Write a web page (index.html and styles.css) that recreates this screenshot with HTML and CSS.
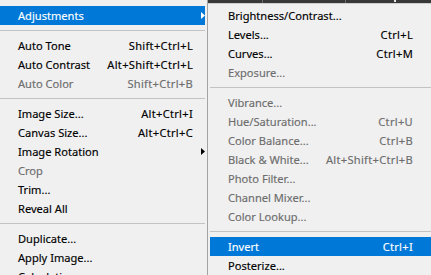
FILE: index.html
```html
<!DOCTYPE html>
<html lang="en">
<head>
    <meta charset="UTF-8">
    <title>Image menu - Adjustments</title>
    <link rel="stylesheet" href="styles.css">
</head>
<body>
    <div class="screen">
        <div class="menu main">
            <div class="item active"><span>Adjustments</span><span class="key"></span><svg class="arrow" width="4" height="7" viewBox="0 0 4 7"><polygon points="0,0 4,3.5 0,7"/></svg></div>
            <div class="sep"></div>
            <div class="item"><span>Auto Tone</span><span class="key">Shift+Ctrl+L</span></div>
            <div class="item"><span>Auto Contrast</span><span class="key">Alt+Shift+Ctrl+L</span></div>
            <div class="item off"><span>Auto Color</span><span class="key">Shift+Ctrl+B</span></div>
            <div class="sep"></div>
            <div class="item"><span>Image Size...</span><span class="key">Alt+Ctrl+I</span></div>
            <div class="item"><span>Canvas Size...</span><span class="key">Alt+Ctrl+C</span></div>
            <div class="item"><span>Image Rotation</span><span class="key"></span><svg class="arrow" width="4" height="7" viewBox="0 0 4 7"><polygon points="0,0 4,3.5 0,7"/></svg></div>
            <div class="item off"><span>Crop</span><span class="key"></span></div>
            <div class="item"><span>Trim...</span><span class="key"></span></div>
            <div class="item"><span>Reveal All</span><span class="key"></span></div>
            <div class="sep"></div>
            <div class="item"><span>Duplicate...</span><span class="key"></span></div>
            <div class="item"><span>Apply Image...</span><span class="key"></span></div>
            <div class="item"><span>Calculations...</span><span class="key"></span></div>
        </div>

        <div class="side">
            <div class="panelbar">
                <span class="tick t1"></span>
                <span class="tick t2"></span>
                <span class="dot"></span>
            </div>
            <div class="menu sub">
                <div class="item"><span>Brightness/Contrast...</span><span class="key"></span></div>
                <div class="item"><span>Levels...</span><span class="key">Ctrl+L</span></div>
                <div class="item"><span>Curves...</span><span class="key">Ctrl+M</span></div>
                <div class="item off"><span>Exposure...</span><span class="key"></span></div>
                <div class="sep"></div>
                <div class="item off"><span>Vibrance...</span><span class="key"></span></div>
                <div class="item off"><span>Hue/Saturation...</span><span class="key">Ctrl+U</span></div>
                <div class="item off"><span>Color Balance...</span><span class="key">Ctrl+B</span></div>
                <div class="item off"><span>Black &amp; White...</span><span class="key">Alt+Shift+Ctrl+B</span></div>
                <div class="item off"><span>Photo Filter...</span><span class="key"></span></div>
                <div class="item off"><span>Channel Mixer...</span><span class="key"></span></div>
                <div class="item off"><span>Color Lookup...</span><span class="key"></span></div>
                <div class="sep"></div>
                <div class="item active"><span>Invert</span><span class="key">Ctrl+I</span></div>
                <div class="item"><span>Posterize...</span><span class="key"></span></div>
            </div>
        </div>
    </div>
</body>
</html>
```

FILE: styles.css
```css
body {
    margin: 0;
    background-color: #f0f0f0;
    font-family: "Noto Sans", "Open Sans", sans-serif;
    overflow: hidden;
}
.screen {
    display: flex;
    width: 431px;
    height: 275px;
    overflow: hidden;
}
.menu {
    background-color: #f0f0f0;
}
.main {
    width: 205px;
    flex-shrink: 0;
    padding: 6px 2px 0 0;
    border-right: 1px solid #a3a3a3;
}
.side {
    flex: 1;
    display: flex;
    flex-direction: column;
    min-width: 0;
}
.panelbar {
    height: 3px;
    background-color: #383838;
    display: flex;
}
.tick {
    width: 1px;
    background-color: #6a6a6a;
}
.t1 {
    margin-left: 54px;
}
.t2 {
    margin-left: 82px;
}
.dot {
    width: 2px;
    height: 2px;
    margin-left: 48px;
    background-color: #e6e6e6;
}
.sub {
    flex: 1;
    padding: 2px 0 0 2px;
    border-top: 1px solid #cfcfcf;
}
.item {
    height: 19px;
    display: grid;
    grid-template-columns: 1fr auto 12px;
    align-items: center;
    padding-left: 18px;
    font-size: 11.1px;
    color: #000;
    white-space: nowrap;
    -webkit-text-stroke: 0.15px currentColor;
}
.sub .item {
    grid-template-columns: 1fr auto 18px;
}
.item.off {
    color: #6d6d6d;
}
.item.active {
    background-color: #0078d7;
    color: #fff;
}
.key {
    text-align: right;
    letter-spacing: 0.3px;
}
.arrow {
    margin-left: 8px;
    fill: currentColor;
}
.sep {
    height: 1px;
    margin: 5px 0;
    background-color: #c3c3c3;
}
```
